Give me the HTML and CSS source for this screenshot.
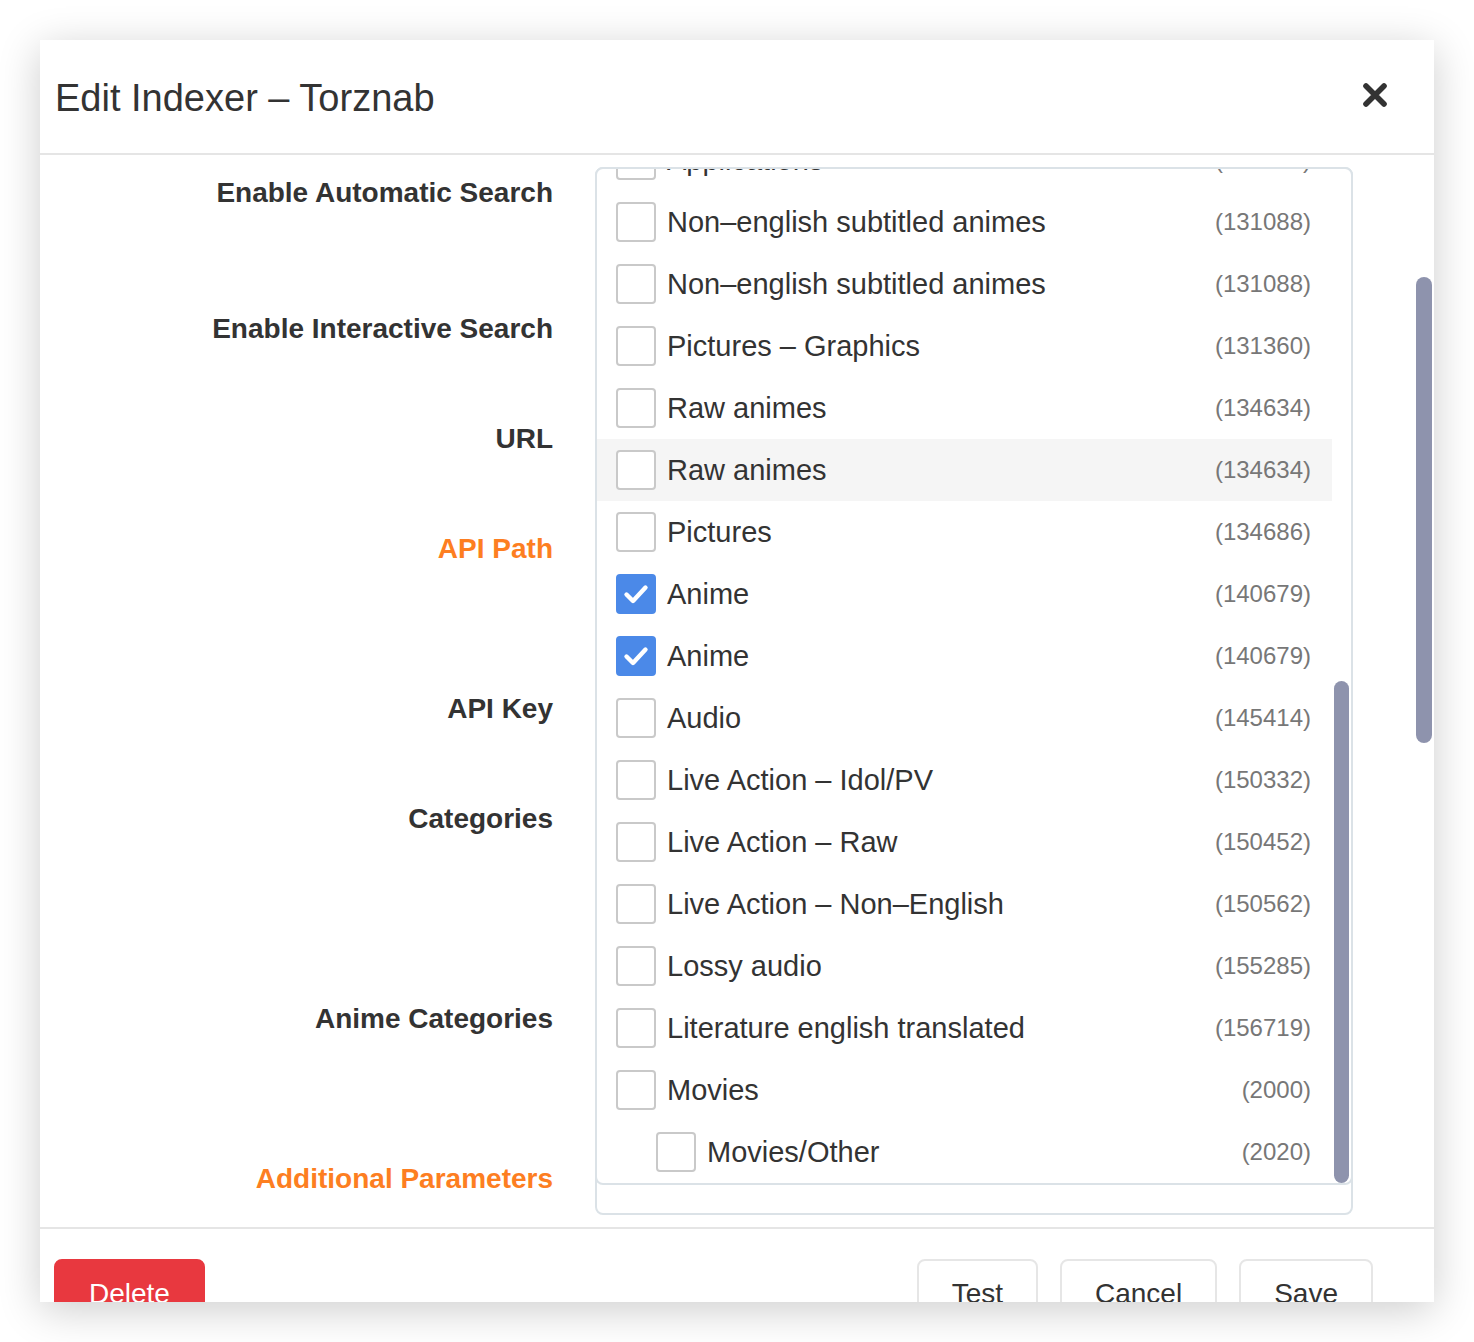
FILE: index.html
```html
<!DOCTYPE html>
<html lang="en">
<head>
<meta charset="utf-8">
<title>Edit Indexer – Torznab</title>
<link rel="stylesheet" href="styles.css">
</head>
<body>
<div class="modal">
  <div class="modal-header">
    <h1 class="modal-title">Edit Indexer – Torznab</h1>
    <button class="close-btn" aria-label="Close">
      <svg width="26" height="26" viewBox="0 0 26 26"><path d="M4 4 L22 22 M22 4 L4 22" stroke="#333" stroke-width="5.6" stroke-linecap="round" fill="none"/></svg>
    </button>
  </div>
  <div class="modal-body">
    <div class="form">
      <div class="labels">
        <div class="lbl h136">Enable Automatic Search</div>
        <div class="lbl h110">Enable Interactive Search</div>
        <div class="lbl h110">URL</div>
        <div class="lbl h160 warn">API Path</div>
        <div class="lbl h110">API Key</div>
        <div class="lbl h200">Categories</div>
        <div class="lbl h160">Anime Categories</div>
        <div class="lbl h40 warn">Additional Parameters</div>
      </div>
      <div class="select">
        <div class="menu">
          <div class="options">
            <div class="opt"><span class="cb"></span><span class="name">Applications</span><span class="count">(100420)</span></div>
            <div class="opt"><span class="cb"></span><span class="name">Non–english subtitled animes</span><span class="count">(131088)</span></div>
            <div class="opt"><span class="cb"></span><span class="name">Non–english subtitled animes</span><span class="count">(131088)</span></div>
            <div class="opt"><span class="cb"></span><span class="name">Pictures – Graphics</span><span class="count">(131360)</span></div>
            <div class="opt"><span class="cb"></span><span class="name">Raw animes</span><span class="count">(134634)</span></div>
            <div class="opt hover"><span class="cb"></span><span class="name">Raw animes</span><span class="count">(134634)</span></div>
            <div class="opt"><span class="cb"></span><span class="name">Pictures</span><span class="count">(134686)</span></div>
            <div class="opt"><span class="cb checked"><svg width="40" height="40" viewBox="0 0 40 40"><path d="M10.5 20.5 L17 27 L29.5 13.5" stroke="#fff" stroke-width="4.4" stroke-linecap="round" stroke-linejoin="round" fill="none"/></svg></span><span class="name">Anime</span><span class="count">(140679)</span></div>
            <div class="opt"><span class="cb checked"><svg width="40" height="40" viewBox="0 0 40 40"><path d="M10.5 20.5 L17 27 L29.5 13.5" stroke="#fff" stroke-width="4.4" stroke-linecap="round" stroke-linejoin="round" fill="none"/></svg></span><span class="name">Anime</span><span class="count">(140679)</span></div>
            <div class="opt"><span class="cb"></span><span class="name">Audio</span><span class="count">(145414)</span></div>
            <div class="opt"><span class="cb"></span><span class="name">Live Action – Idol/PV</span><span class="count">(150332)</span></div>
            <div class="opt"><span class="cb"></span><span class="name">Live Action – Raw</span><span class="count">(150452)</span></div>
            <div class="opt"><span class="cb"></span><span class="name">Live Action – Non–English</span><span class="count">(150562)</span></div>
            <div class="opt"><span class="cb"></span><span class="name">Lossy audio</span><span class="count">(155285)</span></div>
            <div class="opt"><span class="cb"></span><span class="name">Literature english translated</span><span class="count">(156719)</span></div>
            <div class="opt"><span class="cb"></span><span class="name">Movies</span><span class="count">(2000)</span></div>
            <div class="opt sub"><span class="cb"></span><span class="name">Movies/Other</span><span class="count">(2020)</span></div>
          </div>
          <div class="menu-track"><div class="menu-thumb"></div></div>
        </div>
      </div>
    </div>
    <div class="body-track"><div class="body-thumb"></div></div>
  </div>
  <div class="modal-footer">
    <button class="btn btn-danger">Delete</button>
    <div class="footer-right">
      <button class="btn">Test</button>
      <button class="btn">Cancel</button>
      <button class="btn">Save</button>
    </div>
  </div>
</div>
</body>
</html>
```

FILE: styles.css
```css
html, body {
  margin: 0;
  padding: 0;
  background: #fff;
}
body {
  font-family: "Liberation Sans", Arial, sans-serif;
  color: #333;
  padding: 40px;
  height: 1342px;
  box-sizing: border-box;
  overflow: hidden;
}
.modal {
  width: 1394px;
  height: 1262px;
  background: #fff;
  box-shadow: 0 8px 40px rgba(0, 0, 0, 0.2);
  display: flex;
  flex-direction: column;
  overflow: hidden;
}
.modal-header {
  height: 113px;
  flex: none;
  border-bottom: 2px solid #e5e5e5;
  display: flex;
  align-items: center;
  justify-content: space-between;
  padding: 0 46px 0 15px;
}
.modal-title {
  margin: 0;
  font-size: 38px;
  font-weight: 400;
  color: #333;
  line-height: 44px;
  padding-top: 2px;
}
.close-btn {
  border: 0;
  background: none;
  padding: 0;
  width: 26px;
  height: 26px;
  margin-top: -4px;
  display: block;
}
.close-btn svg { display: block; }

.modal-body {
  height: 1072px;
  flex: none;
  display: flex;
  overflow: hidden;
}
.form {
  flex: 1;
  display: flex;
  padding-top: 12px;
}
.labels {
  width: 513px;
  flex: none;
  padding-top: 6px;
  margin-right: 42px;
}
.lbl {
  text-align: right;
  font-size: 28px;
  font-weight: 700;
  line-height: 40px;
  color: #333;
  white-space: nowrap;
}
.lbl.warn { color: #fd7e21; }
.h136 { height: 136px; }
.h110 { height: 110px; }
.h160 { height: 160px; }
.h200 { height: 200px; }
.h40 { height: 40px; }

.select {
  position: relative;
  width: 758px;
  height: 1048px;
  box-sizing: border-box;
  border: 2px solid #dbe2e7;
  border-radius: 8px;
}
.menu {
  position: absolute;
  top: -2px;
  left: -2px;
  right: -2px;
  height: 1018px;
  box-sizing: border-box;
  border: 2px solid #dbe2e7;
  border-radius: 8px;
  background: #fff;
  overflow: hidden;
  display: flex;
}
.options {
  flex: 1;
  margin-top: -40px;
}
.opt {
  height: 62px;
  display: flex;
  align-items: center;
  padding: 0 21px 0 19px;
}
.opt.hover { background: #f5f5f5; }
.opt.sub { padding-left: 59px; }
.cb {
  width: 40px;
  height: 40px;
  box-sizing: border-box;
  border: 2px solid #c9c9c9;
  border-radius: 4px;
  background: #fff;
  flex: none;
  margin-right: 11px;
  position: relative;
}
.cb.checked {
  background: #4b89e8;
  border-color: #4b89e8;
}
.cb.checked svg {
  position: absolute;
  left: -2px;
  top: -2px;
}
.name {
  flex: 1;
  font-size: 29px;
  color: #333;
  white-space: nowrap;
}
.count {
  font-size: 24px;
  color: #777;
}
.menu-track {
  width: 19px;
  flex: none;
}
.menu-thumb {
  margin-top: 512px;
  margin-left: 2px;
  width: 15px;
  height: 502px;
  border-radius: 8px;
  background: #8e93ad;
}
.body-track {
  width: 18px;
  flex: none;
}
.body-thumb {
  margin-top: 122px;
  width: 16px;
  height: 466px;
  border-radius: 8px;
  background: #8e93ad;
}

.modal-footer {
  flex: none;
  border-top: 2px solid #e5e5e5;
  display: flex;
  justify-content: space-between;
  padding: 30px 61px 0 14px;
}
.footer-right {
  display: flex;
  gap: 22px;
}
.btn {
  font-family: "Liberation Sans", Arial, sans-serif;
  font-size: 28px;
  line-height: 42px;
  color: #333;
  background: #fff;
  border: 2px solid #e6e6e6;
  border-radius: 8px;
  padding: 12px 33px;
  height: 70px;
  box-sizing: border-box;
}
.btn-danger {
  background: #e8383f;
  border-color: #e8383f;
  color: #fff;
  padding: 12px 33px;
}
```
